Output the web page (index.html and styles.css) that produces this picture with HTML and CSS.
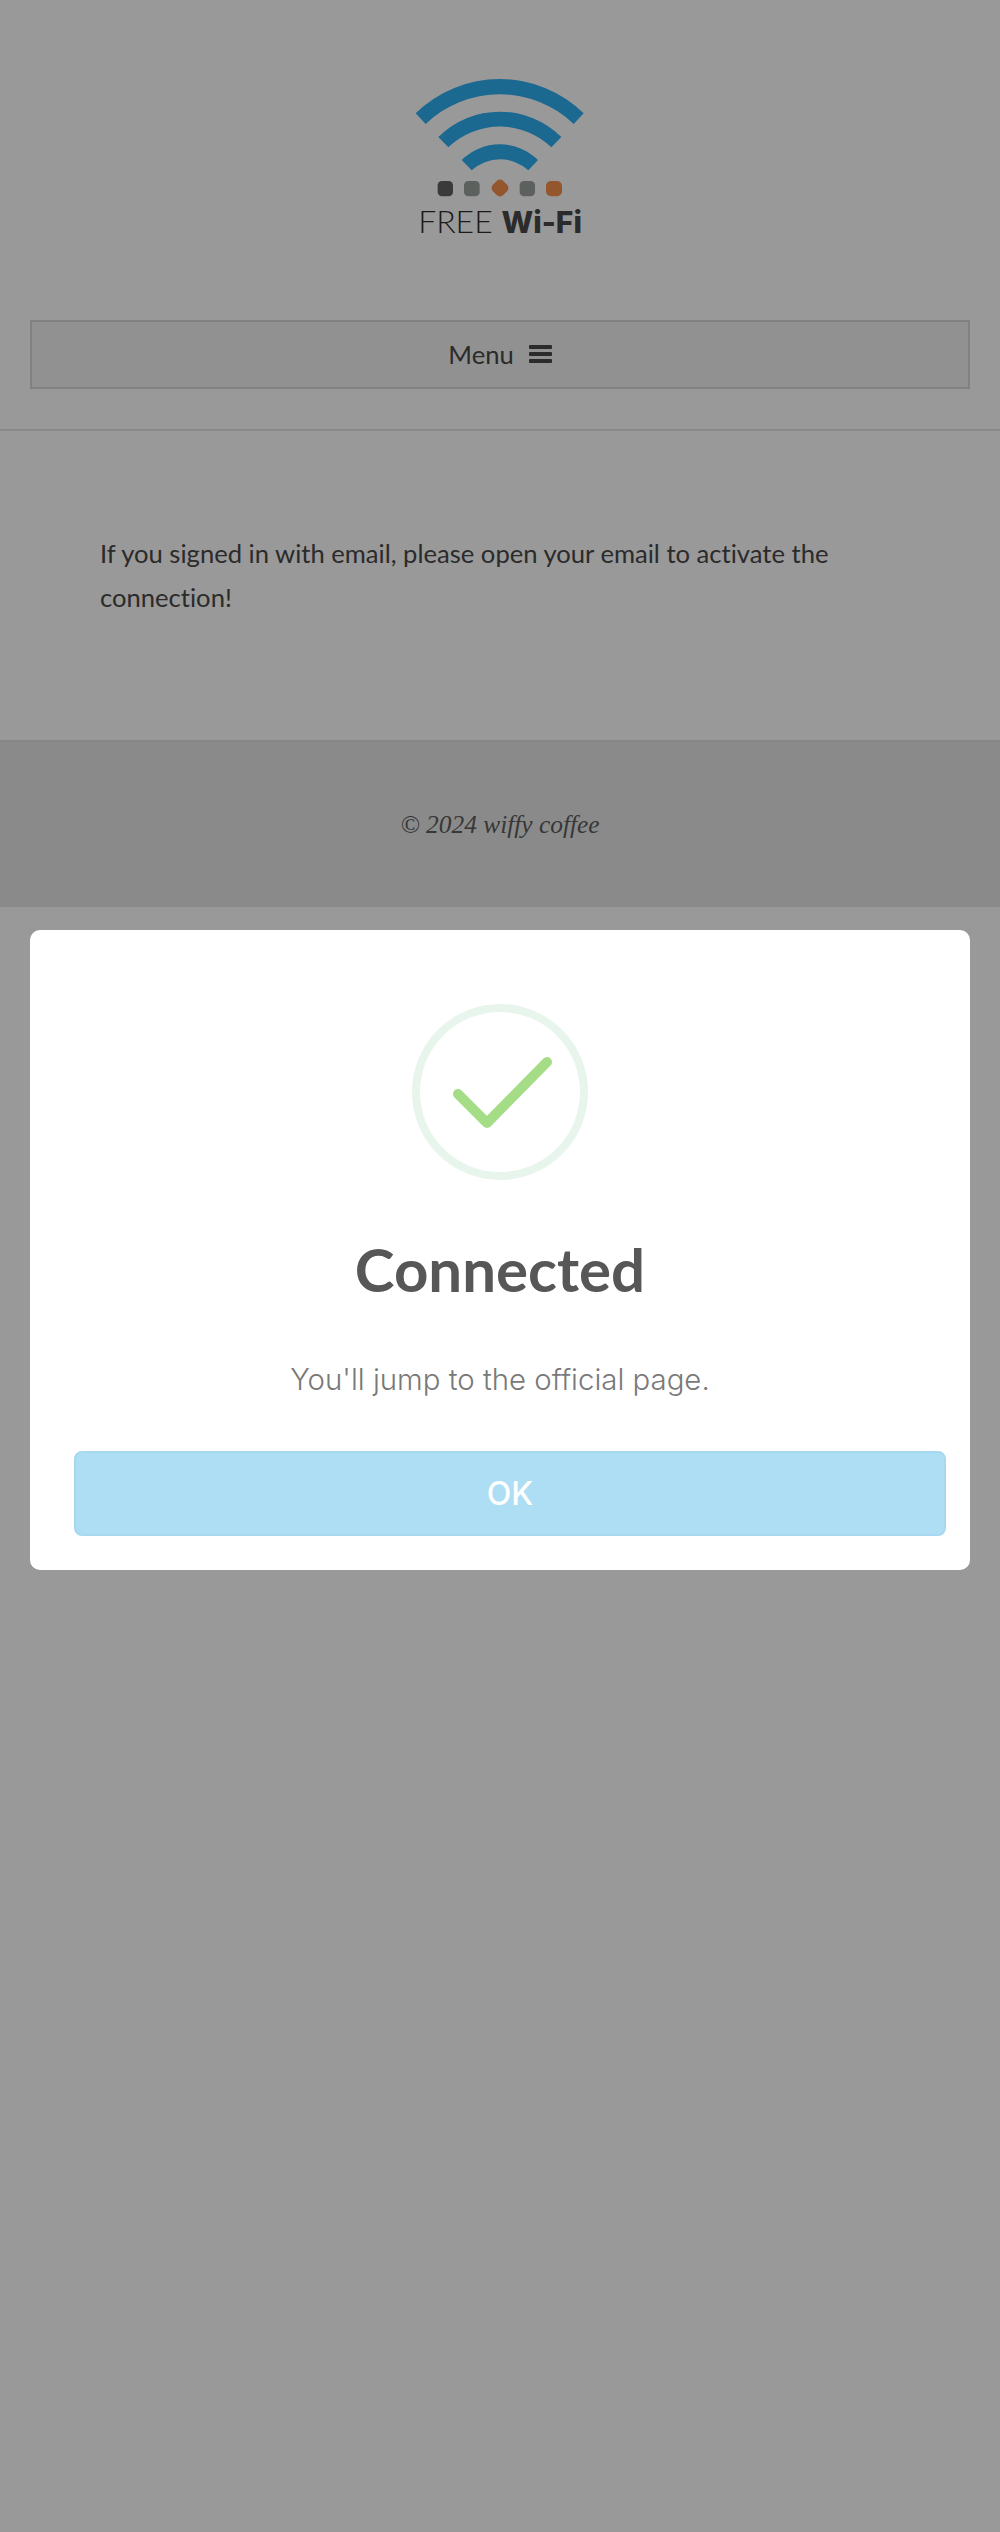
FILE: index.html
```html
<!DOCTYPE html>
<html lang="en">
<head>
    <meta charset="UTF-8">
    <meta name="viewport" content="width=device-width, initial-scale=1.0">
    <title>Free Wi-Fi</title>
    <link rel="stylesheet" href="styles.css">
</head>
<body>
    <header class="site-header">
        <div class="logo">
            <svg class="logo-mark" viewBox="0 0 720 420" width="240" height="140">
                <path class="arc" d="M107 160 A360 360 0 0 1 611 160 L581 192 A321 321 0 0 0 137 192 Z"/>
                <path class="arc" d="M175 231 A262 262 0 0 1 544 231 L514 262 A223 223 0 0 0 205 262 Z"/>
                <path class="arc" d="M245 300 A163 163 0 0 1 474 300 L445 331 A126 126 0 0 0 275 331 Z"/>
                <rect class="dot-dark" x="173" y="363" width="46" height="46" rx="13"/>
                <rect class="dot-grey" x="252" y="363" width="47" height="46" rx="13"/>
                <rect class="dot-orange" x="338" y="362" width="44" height="44" rx="14" transform="rotate(45 360 384)"/>
                <rect class="dot-grey" x="419" y="363" width="46" height="46" rx="13"/>
                <rect class="dot-orange" x="498" y="363" width="48" height="46" rx="15"/>
            </svg>
            <div class="logo-text">FREE <b>Wi-Fi</b></div>
        </div>
        <button class="menu-toggle" type="button">
            Menu
            <span class="menu-icon"><i></i><i></i><i></i></span>
        </button>
    </header>

    <main class="content">
        <p>If you signed in with email, please open your email to activate the connection!</p>
    </main>

    <footer class="site-footer">© 2024 wiffy coffee</footer>

    <div class="overlay">
        <div class="modal">
            <svg class="check" viewBox="0 0 176 176" width="176" height="176">
                <circle cx="88" cy="88" r="84" fill="none" stroke="#e8f5ec" stroke-width="8"/>
                <path d="M46 90 L75 119 L135 58" fill="none" stroke="#a5dc86" stroke-width="10" stroke-linecap="round" stroke-linejoin="round"/>
            </svg>
            <h2>Connected</h2>
            <p>You'll jump to the official page.</p>
            <button class="ok-btn" type="button">OK</button>
        </div>
    </div>
</body>
</html>
```

FILE: styles.css
```css
body {
    font-family: Lato, sans-serif;
    font-variant-ligatures: none;
    background-color: #fff;
    color: #484848;
    margin: 0;
}
.site-header {
    height: 369px;
    padding: 60px 30px 0;
    border-bottom: 2px solid #e4e4e4;
}
.logo {
    height: 260px;
    display: flex;
    flex-direction: column;
    align-items: center;
}
.logo-mark {
    display: block;
}
.arc {
    fill: #2dadf0;
}
.dot-dark {
    fill: #616161;
}
.dot-grey {
    fill: #9aa29d;
}
.dot-orange {
    fill: #f58f4c;
}
.logo-text {
    margin-top: 1px;
    font-size: 32px;
    font-weight: 300;
    line-height: 40px;
    color: #2e2e2e;
    white-space: nowrap;
}
.logo-text b {
    font-family: Inter, sans-serif;
    font-weight: 800;
    font-size: 30px;
    color: #484848;
}
.menu-toggle {
    display: flex;
    align-items: center;
    justify-content: center;
    gap: 15px;
    width: 100%;
    height: 69px;
    padding: 0 0 2px;
    background: #f2f2f2;
    border: 2px solid #d8d8d8;
    color: #484848;
    font-family: Lato, sans-serif;
    font-size: 25.6px;
}
.menu-icon {
    display: flex;
    flex-direction: column;
    gap: 3px;
    width: 23px;
}
.menu-icon i {
    display: block;
    height: 4px;
    border-radius: 1px;
    background: #484848;
}
.content {
    height: 309px;
    padding: 0 100px;
}
.content p {
    margin: 0;
    padding-top: 101px;
    font-size: 25.6px;
    line-height: 43.5px;
}
.site-footer {
    height: 165px;
    line-height: 165px;
    background: #e6e6e6;
    border-top: 2px solid #e2e2e2;
    text-align: center;
    color: #5c5c5c;
    font-family: "Liberation Serif", serif;
    font-style: italic;
    font-size: 25.4px;
}
.overlay {
    position: fixed;
    top: 0;
    left: 0;
    right: 0;
    bottom: 0;
    padding: 930px 30px 0;
    background: rgba(0, 0, 0, 0.4);
}
.modal {
    display: flex;
    flex-direction: column;
    align-items: center;
    height: 640px;
    padding-top: 74px;
    box-sizing: border-box;
    background: #fff;
    border-radius: 10px;
}
.modal h2 {
    margin: 53px 0 0;
    font-size: 60px;
    line-height: 72px;
    font-weight: 700;
    color: #575757;
}
.modal p {
    margin: 55px 0 0;
    font-family: Inter, sans-serif;
    font-weight: 300;
    font-size: 29.4px;
    line-height: 40px;
    color: #797979;
}
.ok-btn {
    align-self: flex-start;
    width: 872px;
    height: 85px;
    margin: 51px 0 0 44px;
    background: #aedef4;
    border: 2px solid #a6d8ef;
    border-radius: 8px;
    color: #fff;
    font-family: Inter, sans-serif;
    font-weight: 500;
    font-size: 32px;
}
```
